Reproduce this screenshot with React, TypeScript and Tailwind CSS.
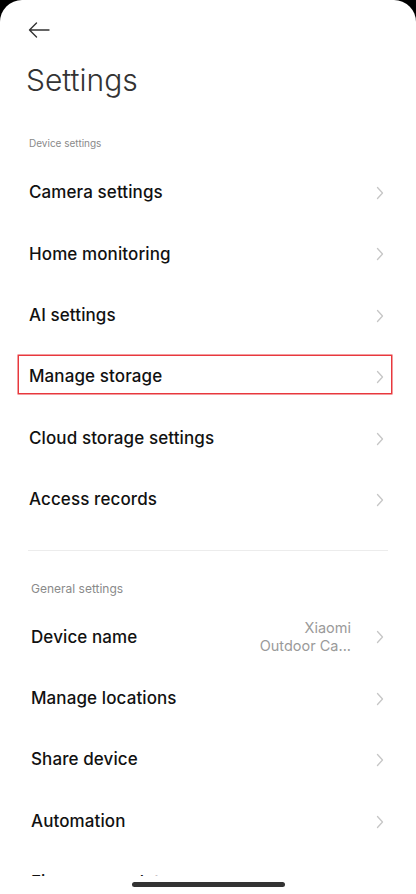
import React from "react";

const Chevron = () => (
  <svg width="8" height="14" viewBox="0 0 8 14" fill="none" className="shrink-0">
    <polyline points="1.5,1.5 6.5,7 1.5,12.5" stroke="#c6c6c6" strokeWidth="1.3" strokeLinecap="round" strokeLinejoin="round" />
  </svg>
);

type RowProps = { label: string; highlight?: boolean; value?: React.ReactNode; shift?: boolean };

const Row = ({ label, highlight, value, shift }: RowProps) => (
  <div className="h-[61.4px] flex items-center pl-[19px] pr-[25px]">
    <div
      className={
        "flex-1 flex items-center pr-[7px] " +
        (shift ? "pl-[12px] " : "pl-[10px] ") +
        (highlight ? "h-[37px] mb-[6px] pt-[6px] ring-[1.5px] ring-[#e8383d]" : "h-[38px]")
      }
    >
      <span className="flex-1 text-[17px] font-medium text-[#111] tracking-[0.1px]">{label}</span>
      {value}
      <Chevron />
    </div>
  </div>
);

export default function App() {
  return (
    <div className="w-[416px] h-[894px] bg-black" style={{ fontFamily: "Inter, 'Noto Sans', sans-serif" }}>
      <div className="w-full h-full bg-white rounded-t-[22px] flex flex-col overflow-hidden">
        <div className="flex-1 overflow-hidden">
          <div className="h-[20px]" />
          <div className="h-[20px] pl-[28px] flex items-center">
            <svg width="22" height="16" viewBox="0 0 22 16" fill="none">
              <path d="M21 8H1.5M8.5 1L1.5 8L8.5 15" stroke="#333" strokeWidth="1.4" strokeLinecap="round" strokeLinejoin="round" />
            </svg>
          </div>
          <div className="h-[20px]" />
          <div className="pl-[26px] h-[40px] flex items-center text-[30px] font-light text-[#333] leading-[40px]">Settings</div>
          <div className="h-[33px]" />
          <div className="pl-[29px] h-[20px] flex items-center text-[10px] text-[#8a8a8a]">Device settings</div>
          <div className="h-[9.3px]" />
          <Row label="Camera settings" />
          <Row label="Home monitoring" />
          <Row label="AI settings" />
          <Row label="Manage storage" highlight />
          <Row label="Cloud storage settings" />
          <Row label="Access records" />
          <div className="h-[19px]" />
          <div className="mx-[28px] h-px bg-[#ececec]" />
          <div className="h-[28px]" />
          <div className="pl-[31px] h-[20px] flex items-center text-[12px] text-[#8a8a8a]">General settings</div>
          <div className="h-[8px]" />
          <Row
            label="Device name"
            shift
            value={
              <div className="text-right text-[14.5px] leading-[18px] text-[#9a9a9a] mr-[25px]">
                <div>Xiaomi</div>
                <div>Outdoor Ca...</div>
              </div>
            }
          />
          <Row label="Manage locations" shift />
          <Row label="Share device" shift />
          <Row label="Automation" shift />
          <Row label="Firmware update" shift />
        </div>
        <div className="h-[18px] flex justify-center pt-[6px] bg-white">
          <div className="w-[153px] h-[5px] rounded-full bg-[#333]" />
        </div>
      </div>
    </div>
  );
}
